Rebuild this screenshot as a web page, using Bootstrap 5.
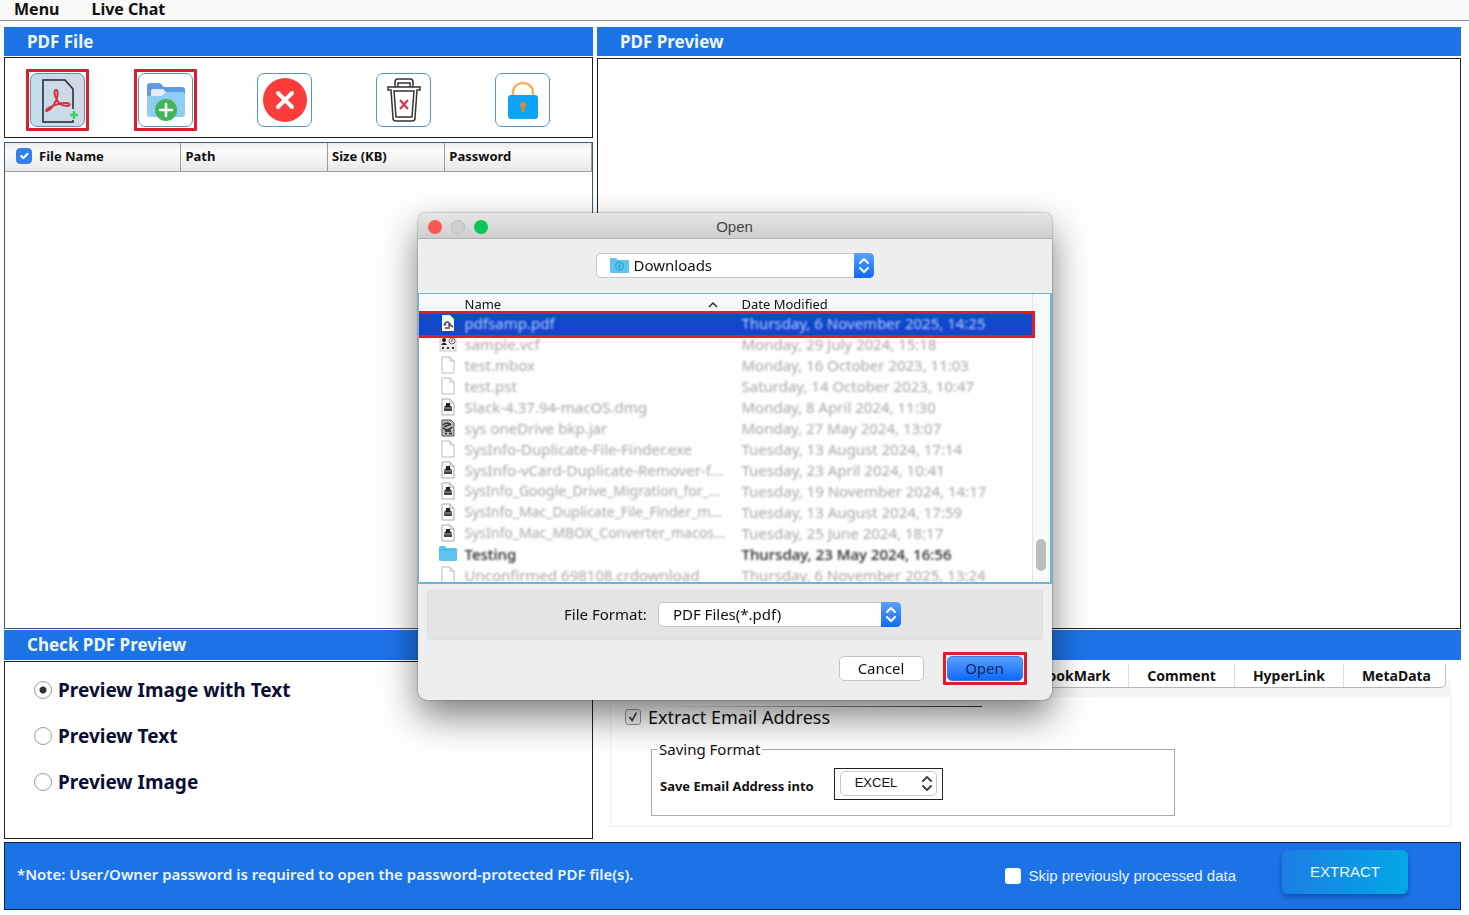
<!DOCTYPE html>
<html lang="en">
<head>
<meta charset="utf-8">
<meta name="viewport" content="width=device-width, initial-scale=1">
<title>PDF Extractor</title>
<link href="https://cdn.jsdelivr.net/npm/bootstrap@5.3.0/dist/css/bootstrap.min.css" rel="stylesheet">
<style>
  :root { --brand: #1c73e6; --signal: #d9202c; }
  body { font-family: "Noto Sans", "Open Sans", sans-serif; font-size: 15px; line-height: 20px; color: #111; background: #fefefe; }
  .app { min-height: 100vh; }
  .app-menu { height: 21px; background: #f9f9f8; border-bottom: 1px solid #8e8e8e; padding-left: 14px; gap: 32px; }
  .app-menu a { font-size: 16px; line-height: 18px; font-weight: 700; color: #111; text-decoration: none; }
  .work { display: grid; grid-template-columns: 589fr 864fr; column-gap: 4px; padding: 6px 8px 0 4px; }
  .bar-title { background: var(--brand); color: #eef6ff; font-size: 17px; font-weight: 700; line-height: 29px; min-height: 29px; padding-left: 23px; margin: 0; }
  .bar-lower { min-height: 30px; line-height: 30px; margin-top: 1px; }
  .lined { border: 1px solid #222; background: #fefefe; }
  .preview-pane { margin-top: 2px; }
  .tools { height: 81px; margin-top: 1px; padding: 5px 0 0 25px; gap: 64px; }
  .tools-marked { gap: 53px; }
  .tool { width: 55px; height: 54px; padding: 0; border: 1px solid #5b93bf; border-radius: 7px; background: #fff; }
  .tool svg { display: block; margin: auto; }
  .tool.active-tool { background: linear-gradient(90deg, #c3dcec, #d3d8e6); }
  .marked { position: relative; }
  .marked::after { content: ""; position: absolute; inset: -5px; border: 3px solid var(--signal); border-radius: 1px; pointer-events: none; }
  .files { border: 1px solid #365c7c; margin-top: 4px; background: #fefefe; }
  .files table { width: 100%; table-layout: fixed; font-size: 13px; }
  .files th { height: 28px; padding: 0 4px 2px; font-weight: 700; border-right: 1px solid #9c9c9c; border-bottom: 1px solid #9c9c9c; background: linear-gradient(#ededed, #fbfbfb 30%, #e9e9e9); }
  .files .form-check-input { width: 16px; height: 16px; margin: 0 7px 0 7px; border-radius: 4px; }
  .files .form-check-input:checked { background-color: #2f7fec; border-color: #2f7fec; }
  .lower { height: 179px; }
  .previews { padding: 16px 0 0 29px; gap: 22px; margin-top: 1px; height: 178px; }
  .previews label { font-size: 19px; line-height: 24px; font-weight: 700; color: #0d0d35; }
  .previews input { appearance: none; width: 18px; height: 18px; margin: 0 6px 0 0; border: 1px solid #9b9b9b; border-radius: 50%; background: #fff; }
  .previews input:checked { background: radial-gradient(circle, #333 0 3px, #fff 4px); }
  .tabs-wrap { position: relative; z-index: 1; padding: 4px 15px 0 0; margin-bottom: -7px; }
  .tab-strip { background: #fff; border-bottom: 1px solid #b5b5b5; border-right: 1px solid #c4c4c4; border-radius: 0 0 5px 0; height: 24px; padding-right: 14px; }
  .tab-strip button { border: 0; background: none; padding: 0 18px; font-size: 14px; line-height: 24px; font-weight: 700; color: #111; }
  .tab-strip button:last-child { padding-right: 0; }
  .tab-strip button + button { border-left: 1px solid #dcdcdc; }
  .tab-body { margin: 0 10px 0 13px; height: 146px; border: 1px solid #f0f0f0; border-top: 16px solid #f5f5f4; padding: 9px 0 0 14px; }
  .rule { height: 1px; width: 357px; background: linear-gradient(90deg, transparent 10%, #333); }
  .extract-line { font-size: 18px; line-height: 20px; }
  .extract-line input { appearance: none; width: 16px; height: 16px; margin: 0 7px 0 0; border: 1px solid #999; border-radius: 3px; background: #f4f4f4 url("data:image/svg+xml,%3Csvg xmlns='http://www.w3.org/2000/svg' viewBox='0 0 16 16'%3E%3Cpath d='M4 8l3 4 5-9' fill='none' stroke='%23444' stroke-width='2'/%3E%3C/svg%3E"); }
  .saving { width: 524px; height: 77px; margin: 12px 0 0 26px; padding: 0 0 0 8px; border: 1px solid #aaa; }
  .saving legend { float: none; width: auto; margin: 0 0 0 -3px; padding: 0 2px; font-size: 15px; line-height: 20px; }
  .saving label { font-size: 13px; font-weight: 700; padding-top: 3px; }
  .saving-row { margin-top: 9px; }
  .excel-box { border: 1px solid #222; padding: 2px 5px 3px; margin-left: 20px; }
  .mac-select { position: relative; }
  .mac-select select { appearance: none; border: 1px solid #c6c6c6; border-radius: 5px; background: #fff; color: #111; width: 100%; height: 25px; padding: 0 24px 1px 14px; font-size: 15px; line-height: 20px; }
  .mac-select .arrows { position: absolute; top: 0; right: 0; pointer-events: none; }
  .mac-select .leading { position: absolute; top: 4px; left: 14px; pointer-events: none; }
  .excel-box select { font-family: "Liberation Sans", sans-serif; font-size: 13px; width: 97px; }
  .foot { background: var(--brand); border: 1px solid #0d2247; color: #e9f4ff; margin: 3px 8px 5px 4px; height: 68px; padding: 0 52px 0 12px; font-family: "Liberation Sans", sans-serif; }
  .foot .note { font-family: "Noto Sans", sans-serif; font-weight: 600; font-size: 15px; padding-bottom: 4px; }
  .foot .form-check-input { width: 16px; height: 16px; margin: 0 7px 0 0; border: 0; border-radius: 3px; }
  .extract-btn { width: 126px; height: 44px; border: 0; border-radius: 6px; margin: 0 0 9px 46px; color: #e9f8ff; background: linear-gradient(90deg, #1c7ee4, #02a8e6); box-shadow: 0 3px 5px rgba(0, 30, 100, .4); font-size: 15px; }
  .open-dialog { --bs-modal-width: 634px; --bs-modal-margin: 0px; }
  .open-dialog .modal-content { border: 0; border-radius: 7px 7px 9px 9px; background: #eee; box-shadow: 0 0 2px rgba(0, 0, 0, .5), 0 16px 36px rgba(0, 0, 0, .5); overflow: hidden; margin-top: -2px; }
  .dlg-title { height: 26px; background: linear-gradient(#e6e6e6, #cecece); border-bottom: 1px solid #b0b0b0; padding: 2px 10px 0; display: grid; grid-template-columns: 1fr auto 1fr; align-items: center; font-family: "Liberation Sans", sans-serif; color: #444; }
  .dots { gap: 9px; }
  .dot { width: 14px; height: 14px; border-radius: 50%; }
  .dot-close { background: #fc5753; }
  .dot-min { background: #d0d0d0; border: 1px solid #bcbcbc; }
  .dot-zoom { background: #0ac655; }
  .folder-pick { width: 278px; margin: 14px auto 15px; }
  .folder-pick select { padding-left: 37px; }
  .list-box { height: 291px; border: 2px solid #6fb3d6; border-width: 1px 2px 2px 1px; background: #fefefd; overflow: hidden; }
  .list-box table { width: 100%; table-layout: fixed; position: relative; z-index: 1; }
  .col-icon { width: 46px; }
  .col-name { width: 277px; }
  .list-box th { height: 20px; padding: 0; font-size: 13px; line-height: 19px; font-weight: 400; background: #f8f8f8; }
  .list-box tbody tr { height: 21px; color: #a9a9a9; }
  .list-box td { padding: 0 0 3px; white-space: nowrap; line-height: 18px; font-size: 15px; }
  .list-box td svg { display: block; margin-left: 20px; }
  .soft { display: block; filter: blur(1px); }
  .long-name { font-size: 14px; }
  .list-box .picked { background: #1047cb; color: #b5cdfa; outline: 3px solid var(--signal); outline-offset: 0; }
  .list-box .folder { color: #222; font-weight: 500; }
  .list-scroll { width: 18px; flex: none; border-left: 1px solid #e4e4e4; padding: 0 4px 11px 3px; background: #fafafa; }
  .thumb { height: 32px; border-radius: 5px; background: #bdbdbd; }
  .format-box { height: 50px; margin: 6px 9px 12px; padding: 0 4px 2px 0; background: #e4e4e4; border: 1px solid #dedede; border-radius: 3px; }
  .format-box label { margin-right: 11px; }
  .format-pick { width: 243px; }
  .dlg-buttons { padding: 4px 29px 19px; gap: 23px; }
  .dlg-buttons button { height: 25px; border: 1px solid #c4c4c4; border-radius: 5px; background: #fff; padding: 0 0 2px; line-height: 20px; color: #111; width: 85px; }
  .dlg-buttons .go { width: 76px; background: linear-gradient(#5aa0fb, #0f68fa); border-color: #3c7de0; color: #06265c; }
</style>
</head>
<body>
<svg width="0" height="0" class="position-absolute" aria-hidden="true">
  <symbol id="page" viewBox="0 0 18 18"><path d="M3 1h8l4 4v12H3z" fill="#fff" stroke="#bbb"/><path d="M11 1v4h4" fill="none" stroke="#bbb"/></symbol>
  <symbol id="disk" viewBox="0 0 18 18"><path d="M3 1h8l4 4v12H3z" fill="#fff" stroke="#aaa"/><path d="M11 1v4h4" fill="none" stroke="#aaa"/><path d="M5 9l2-2h4l2 2v4H5z" fill="#444"/><path d="M7 5h4v4H7z" fill="#222"/><path d="M5 10h8" stroke="#999"/></symbol>
  <symbol id="pdfdoc" viewBox="0 0 18 18"><path d="M3 1h8l4 4v12H3z" fill="#f5f7fb"/><path d="M5 11q3-5 5-2t4 4M6 14h3m1-4v5M6 9v3" fill="none" stroke="#445" stroke-width="1.4"/></symbol>
  <symbol id="vcard" viewBox="0 0 18 18"><path d="M1 2h16v14H1z" fill="#eee" stroke="#ccc"/><circle cx="5" cy="5" r="2" fill="#222"/><path d="M2 10q3-5 6 0z" fill="#222"/><circle cx="13" cy="6" r="3" fill="none" stroke="#777"/><path d="M12 7l2-3" stroke="#555"/><path d="M3 13h2m3 0h2m3 0h2" stroke="#333" stroke-width="2"/></symbol>
  <symbol id="jar" viewBox="0 0 18 18"><path d="M3 1h9l3 3v13H3z" fill="#bbb" stroke="#555"/><path d="M4 9q5 4 9-1M4 6q4-4 8 0M5 8l7-3" fill="none" stroke="#333" stroke-width="1.5"/><path d="M6 12h6M6 14.500h2m2 0h3" stroke="#222" stroke-width="1.5"/></symbol>
  <symbol id="folder" viewBox="0 0 18 18"><path d="M0 3q0-2 2-2h4l2 2h8q2 0 2 2v10q0 1-2 1H2q-2 0-2-1z" fill="#5cc6f0"/><path d="M0 5h18" stroke="#46b0e0"/></symbol>
  <symbol id="updown" viewBox="0 0 20 25"><path d="M6 10l4-4 4 4M6 15l4 4 4-4" fill="none" stroke="currentColor" stroke-width="2" stroke-linecap="round" stroke-linejoin="round"/></symbol>
  <linearGradient id="blue" x2="0" y2="1"><stop stop-color="#5ba2fb"/><stop offset="1" stop-color="#0f6af8"/></linearGradient>
</svg>

<div class="app d-flex flex-column">
  <nav class="app-menu d-flex align-items-start"><a href="#">Menu</a><a href="#">Live Chat</a></nav>

  <main class="work flex-grow-1">
    <section class="d-flex flex-column">
      <h2 class="bar-title">PDF File</h2>
      <div class="lined tools d-flex align-items-center">
        <div class="tools-marked d-flex">
          <button class="tool active-tool marked" aria-label="Add PDF file">
            <svg width="40" height="48" viewBox="0 0 40 48"><path d="M35 33V13l-8-9H5v42h30v-2" fill="none" stroke="#1c2530" stroke-width="1.500"/><path d="M9 35c4-1 8-8 10-13 1-4 1-8-1-8s-2 4 0 8c2 5 6 8 11 8 4 0 3-3-1-3-7 0-15 3-19 6-1 1-1 2 0 2z" fill="none" stroke="#d5303c" stroke-width="2"/><path d="M36 35v8M32 39h8" stroke="#35d36b" stroke-width="2.500"/></svg>
          </button>
          <button class="tool marked" aria-label="Add folder">
            <svg width="40" height="44" viewBox="0 0 40 44"><path d="M1 8q0-3 3-3h10l4 4h18q3 0 3 3v8H1z" fill="#5e9ae6"/><path d="M5 13q0-2 2-2h10l3 3h14v10H5z" fill="#e6ebfa"/><path d="M1 18h15l4-4h16q3 0 3 3v19q0 3-3 3H4q-3 0-3-3z" fill="#8fcdf4"/><circle cx="20" cy="32" r="11" fill="#42b45c"/><path d="M20 26v12M14 32h12" stroke="#fff" stroke-width="2.500" stroke-linecap="round"/></svg>
          </button>
        </div>
        <button class="tool" aria-label="Remove">
          <svg width="46" height="46" viewBox="0 0 46 46"><circle cx="23" cy="23" r="22" fill="#fa3c3b"/><path d="M16 16l14 14M30 16l-14 14" stroke="#fff" stroke-width="4" stroke-linecap="round"/></svg>
        </button>
        <button class="tool" aria-label="Remove all">
          <svg width="36" height="46" viewBox="0 0 36 46" fill="none" stroke="#333" stroke-width="1.500"><path d="M9 10V5q0-3 3-3h12q3 0 3 3v5M12 10V6h12v4zM2 10h32v3h-3l-2 28q0 3-3 3H10q-3 0-3-3L5 13H2z"/><path d="M8 14h20l-2 26H10z"/><path d="M14 23l8 9M22 23l-8 9" stroke="#d83050" stroke-width="2"/></svg>
        </button>
        <button class="tool" aria-label="Unlock">
          <svg width="32" height="40" viewBox="0 0 32 40"><path d="M6 16V12a10 9 0 0 1 20 0v4" fill="none" stroke="#f4b25c" stroke-width="2.500"/><rect x="1" y="15" width="30" height="24" rx="3" fill="#0ca3f8"/><circle cx="16" cy="25" r="3" fill="#d38a35"/><path d="M16 25v7" stroke="#d38a35" stroke-width="3"/></svg>
        </button>
      </div>
      <div class="files flex-grow-1">
        <table>
          <colgroup><col style="width:30%"><col style="width:25%"><col style="width:20%"><col style="width:25%"></colgroup>
          <thead><tr>
            <th><label class="d-flex align-items-center"><input class="form-check-input" type="checkbox" checked>File Name</label></th>
            <th>Path</th><th>Size (KB)</th><th>Password</th>
          </tr></thead>
        </table>
      </div>
      <h2 class="bar-title bar-lower">Check PDF Preview</h2>
      <div class="lined previews d-flex flex-column">
        <label class="d-flex align-items-center"><input type="radio" name="pv" checked>Preview Image with Text</label>
        <label class="d-flex align-items-center"><input type="radio" name="pv">Preview Text</label>
        <label class="d-flex align-items-center"><input type="radio" name="pv">Preview Image</label>
      </div>
    </section>

    <section class="d-flex flex-column">
      <h2 class="bar-title">PDF Preview</h2>
      <div class="lined flex-grow-1 preview-pane"></div>
      <div class="bar-title bar-lower"></div>
      <div class="lower">
        <div class="tabs-wrap d-flex justify-content-end">
          <div class="tab-strip d-flex"><button>BookMark</button><button>Comment</button><button>HyperLink</button><button>MetaData</button></div>
        </div>
        <div class="tab-body">
          <div class="rule"></div>
          <label class="extract-line d-flex align-items-center"><input type="checkbox" checked>Extract Email Address</label>
          <fieldset class="saving">
            <legend>Saving Format</legend>
            <div class="saving-row d-flex align-items-center">
              <label for="fmt">Save Email Address into</label>
              <div class="excel-box"><div class="mac-select"><select id="fmt"><option>EXCEL</option></select><svg class="arrows" width="20" height="25" color="#444"><use href="#updown"/></svg></div></div>
            </div>
          </fieldset>
        </div>
      </div>
    </section>
  </main>

  <footer class="foot d-flex align-items-center">
    <span class="note me-auto">*Note: User/Owner password is required to open the password-protected PDF file(s).</span>
    <label class="d-flex align-items-center"><input class="form-check-input" type="checkbox">Skip previously processed data</label>
    <button class="extract-btn">EXTRACT</button>
  </footer>
</div>

<div class="modal d-block open-dialog" role="dialog" aria-label="Open">
  <div class="modal-dialog modal-dialog-centered">
    <div class="modal-content">
      <div class="dlg-title">
        <div class="dots d-flex"><span class="dot dot-close"></span><span class="dot dot-min"></span><span class="dot dot-zoom"></span></div>
        <span>Open</span>
      </div>
      <div class="mac-select folder-pick">
        <svg class="leading" width="19" height="17" viewBox="0 0 19 17"><path d="M0 2q0-1 1-1h5l2 2h10q1 0 1 1v11q0 1-1 1H1q-1 0-1-1z" fill="#5cc6ee"/><circle cx="9.500" cy="9" r="4" fill="none" stroke="#2d9bd0"/><path d="M9.500 6v5M7.500 9l2 2 2-2" fill="none" stroke="#2d9bd0"/></svg>
        <select aria-label="Folder"><option>Downloads</option></select>
        <svg class="arrows" width="20" height="25" color="#fff"><path d="M0 0h15q5 0 5 5v15q0 5-5 5H0z" fill="url(#blue)"/><use href="#updown"/></svg>
      </div>
      <div class="list-box d-flex">
        <table>
          <colgroup><col class="col-icon"><col class="col-name"><col></colgroup>
          <thead><tr><th></th><th><span class="d-flex justify-content-between align-items-center pe-4">Name<svg width="10" height="7" viewBox="0 0 10 7"><path d="M1 6l4-4 4 4" fill="none" stroke="#333" stroke-width="1.500"/></svg></span></th><th>Date Modified</th></tr></thead>
          <tbody id="rows"></tbody>
        </table>
        <div class="list-scroll d-flex flex-column justify-content-end"><div class="thumb"></div></div>
      </div>
      <div class="format-box d-flex align-items-center justify-content-center">
        <label for="ff">File Format:</label>
        <div class="mac-select format-pick"><select id="ff"><option>PDF Files(*.pdf)</option></select><svg class="arrows" width="20" height="25" color="#fff"><path d="M0 0h15q5 0 5 5v15q0 5-5 5H0z" fill="url(#blue)"/><use href="#updown"/></svg></div>
      </div>
      <div class="dlg-buttons d-flex justify-content-end"><button>Cancel</button><button class="go marked">Open</button></div>
    </div>
  </div>
</div>
<script>
  const rows = [
    ["pdfdoc", "pdfsamp.pdf", "Thursday, 6 November 2025, 14:25", "picked"],
    ["vcard", "sample.vcf", "Monday, 29 July 2024, 15:18"],
    ["page", "test.mbox", "Monday, 16 October 2023, 11:03"],
    ["page", "test.pst", "Saturday, 14 October 2023, 10:47"],
    ["disk", "Slack-4.37.94-macOS.dmg", "Monday, 8 April 2024, 11:30"],
    ["jar", "sys oneDrive bkp.jar", "Monday, 27 May 2024, 13:07"],
    ["page", "SysInfo-Duplicate-File-Finder.exe", "Tuesday, 13 August 2024, 17:14"],
    ["disk", "SysInfo-vCard-Duplicate-Remover-f...", "Tuesday, 23 April 2024, 10:41"],
    ["disk", "SysInfo_Google_Drive_Migration_for_...", "Tuesday, 19 November 2024, 14:17"],
    ["disk", "SysInfo_Mac_Duplicate_File_Finder_m...", "Tuesday, 13 August 2024, 17:59"],
    ["disk", "SysInfo_Mac_MBOX_Converter_macos...", "Tuesday, 25 June 2024, 18:17"],
    ["folder", "Testing", "Thursday, 23 May 2024, 16:56", "folder"],
    ["page", "Unconfirmed 698108.crdownload", "Thursday, 6 November 2025, 13:24"]
  ];
  document.getElementById("rows").innerHTML = rows.map(([icon, name, date, kind = ""]) =>
    `<tr class="${kind}"><td><svg width="18" height="18"><use href="#${icon}"/></svg></td><td><span class="soft ${name.includes("_") ? "long-name" : ""}">${name}</span></td><td><span class="soft">${date}</span></td></tr>`).join("");
</script>
</body>
</html>
